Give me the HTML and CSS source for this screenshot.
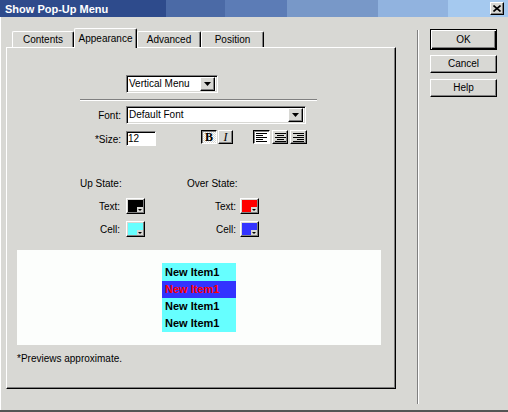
FILE: index.html
```html
<!DOCTYPE html>
<html>
<head>
<meta charset="utf-8">
<link rel="stylesheet" href="styles.css">
</head>
<body>
<div class="window">
  <div class="titlebar">
    <span class="title">Show Pop-Up Menu</span>
    <span class="close"><svg width="8" height="7" viewBox="0 0 8 7"><path d="M0.5 0.5L7.5 6.5M7.5 0.5L0.5 6.5" stroke="#000" stroke-width="1.6"/></svg></span>
  </div>
  <div class="body">
    <div class="left">
      <div class="tabs">
        <div class="tab t-contents">Contents</div>
        <div class="tab t-appearance active">Appearance</div>
        <div class="tab t-advanced">Advanced</div>
        <div class="tab t-position">Position</div>
      </div>
      <div class="panel">
        <div class="type-row">
          <div class="select sel-type">
            <span class="sel-text">Vertical Menu</span>
            <span class="arrow-btn"><svg width="7" height="4" viewBox="0 0 7 4"><path d="M0 0H7L3.5 4Z" fill="#000"/></svg></span>
          </div>
        </div>
        <div class="rule"></div>
        <div class="font-row">
          <span class="lbl">Font:</span>
          <div class="select sel-font">
            <span class="sel-text">Default Font</span>
            <span class="arrow-btn"><svg width="7" height="4" viewBox="0 0 7 4"><path d="M0 0H7L3.5 4Z" fill="#000"/></svg></span>
          </div>
        </div>
        <div class="size-row">
          <span class="lbl">*Size:</span>
          <div class="input">12</div>
          <span class="tbtn pressed dither b-btn">B</span>
          <span class="tbtn i-btn">I</span>
          <span class="tbtn pressed white al-left"><svg width="11" height="9" viewBox="0 0 11 9"><path d="M0 0.5H11M0 2.5H7M0 4.5H11M0 6.5H7M0 8.5H11" stroke="#000"/></svg></span>
          <span class="tbtn al-center"><svg width="11" height="9" viewBox="0 0 11 9"><path d="M0 0.5H11M2 2.5H9M0 4.5H11M2 6.5H9M0 8.5H11" stroke="#000"/></svg></span>
          <span class="tbtn al-right"><svg width="11" height="9" viewBox="0 0 11 9"><path d="M0 0.5H11M4 2.5H11M0 4.5H11M4 6.5H11M0 8.5H11" stroke="#000"/></svg></span>
        </div>
        <div class="states">
          <div class="state-col up">
            <div class="state-head">Up State:</div>
            <div class="state-row first">
              <span class="slbl">Text:</span>
              <span class="swatch"><svg width="15" height="12" viewBox="0 0 15 12"><path d="M0 0H15V7H9V12H0Z" fill="#000"/><path d="M10 9H14L12 11Z" fill="#000"/></svg></span>
            </div>
            <div class="state-row">
              <span class="slbl">Cell:</span>
              <span class="swatch"><svg width="15" height="12" viewBox="0 0 15 12"><path d="M0 0H15V7H9V12H0Z" fill="#66ffff"/><path d="M10 9H14L12 11Z" fill="#000"/></svg></span>
            </div>
          </div>
          <div class="state-col over">
            <div class="state-head">Over State:</div>
            <div class="state-row first">
              <span class="slbl">Text:</span>
              <span class="swatch"><svg width="15" height="12" viewBox="0 0 15 12"><path d="M0 0H15V7H9V12H0Z" fill="#ff0000"/><path d="M10 9H14L12 11Z" fill="#000"/></svg></span>
            </div>
            <div class="state-row">
              <span class="slbl">Cell:</span>
              <span class="swatch"><svg width="15" height="12" viewBox="0 0 15 12"><path d="M0 0H15V7H9V12H0Z" fill="#3333ff"/><path d="M10 9H14L12 11Z" fill="#000"/></svg></span>
            </div>
          </div>
        </div>
        <div class="preview">
          <div class="menu">
            <div class="mi first">New Item1</div>
            <div class="mi over">New Item1</div>
            <div class="mi">New Item1</div>
            <div class="mi">New Item1</div>
          </div>
        </div>
        <div class="note">*Previews approximate.</div>
      </div>
    </div>
    <div class="sep"></div>
    <div class="buttons">
      <div class="btn default">OK</div>
      <div class="btn cancel">Cancel</div>
      <div class="btn help">Help</div>
    </div>
  </div>
</div>
</body>
</html>
```

FILE: styles.css
```css
html, body {
  margin: 0;
  padding: 0;
  background: #d8d8d4;
}
body {
  font-family: "Liberation Sans", Arial, sans-serif;
  font-size: 10px;
  color: #000;
}
.window {
  width: 508px;
  height: 412px;
  box-sizing: border-box;
  background: #d8d8d4;
  border-bottom: 2px solid #555555;
  display: flex;
  flex-direction: column;
  overflow: hidden;
}
.titlebar {
  height: 17px;
  flex: none;
  display: flex;
  align-items: center;
  justify-content: space-between;
  padding: 0 4px 0 5px;
  background: linear-gradient(to right,
    #2e4b8c 0, #2e4b8c 166px,
    #4b6aa6 166px, #4b6aa6 225px,
    #5c7cb6 225px, #5c7cb6 287px,
    #7898c8 287px, #7898c8 378px,
    #91b3df 378px, #91b3df 448px,
    #a5c9ef 448px);
}
.title {
  color: #fff;
  font-weight: bold;
  font-size: 11px;
  line-height: 17px;
  padding-top: 1px;
}
.close {
  width: 14px;
  height: 13px;
  box-sizing: border-box;
  background: #d8d8d4;
  border: 1px solid;
  border-color: #fff #000 #000 #fff;
  box-shadow: inset -1px -1px #808080;
  display: flex;
  align-items: center;
  justify-content: center;
}
.body {
  flex: 1;
  display: flex;
  box-shadow: inset 1px 0 #fff;
}
.left {
  margin: 11px 0 0 6px;
  width: 390px;
  display: flex;
  flex-direction: column;
}
.tabs {
  height: 19px;
  display: flex;
  align-items: flex-end;
  padding-left: 6px;
}
.tab {
  height: 16px;
  box-sizing: border-box;
  border-top: 1px solid #fff;
  border-left: 1px solid #fff;
  border-right: 1px solid #000;
  box-shadow: inset -1px 0 #808080;
  border-radius: 2px 2px 0 0;
  text-align: center;
  line-height: 15px;
  background: #d8d8d4;
}
.t-contents { width: 62px; }
.t-appearance { width: 63px; }
.t-advanced { width: 64px; }
.t-position { width: 63px; }
.tab.active {
  height: 20px;
  margin-bottom: -1px;
  line-height: 19px;
  position: relative;
  z-index: 1;
}
.panel {
  width: 390px;
  height: 342px;
  box-sizing: border-box;
  border-top: 1px solid #fff;
  border-left: 1px solid #fff;
  border-right: 1px solid #000;
  border-bottom: 1px solid #000;
  box-shadow: inset -1px -1px #808080;
}
.type-row {
  margin: 27px 0 0 119px;
}
.select {
  height: 18px;
  box-sizing: border-box;
  background: #fff;
  border: 1px solid;
  border-color: #808080 #fff #fff #808080;
  box-shadow: inset 1px 1px #000, inset -1px -1px #d8d8d4;
  padding: 2px 2px 2px 2px;
  display: flex;
  align-items: center;
  justify-content: space-between;
}
.sel-type { width: 92px; }
.sel-font { width: 180px; }
.sel-text {
  line-height: 12px;
  padding-left: 0;
}
.arrow-btn {
  width: 15px;
  height: 14px;
  box-sizing: border-box;
  background: #d8d8d4;
  border: 1px solid;
  border-color: #fff #000 #000 #fff;
  box-shadow: inset -1px -1px #808080;
  display: flex;
  align-items: center;
  justify-content: center;
}
.rule {
  margin: 6px 0 0 73px;
  width: 237px;
  height: 1px;
  background: #808080;
  border-bottom: 1px solid #fff;
}
.font-row {
  display: flex;
  align-items: center;
  margin-top: 5px;
}
.lbl {
  width: 114px;
  padding-right: 5px;
  text-align: right;
}
.size-row {
  display: flex;
  align-items: flex-start;
  margin-top: 6px;
  height: 16px;
}
.size-row .lbl {
  line-height: 16px;
  padding-top: 2px;
  line-height: 15px;
}
.input {
  width: 30px;
  height: 15px;
  margin-top: 1px;
  box-sizing: border-box;
  background: #fff;
  border: 1px solid;
  border-color: #808080 #fff #fff #808080;
  box-shadow: inset 1px 1px #000;
  padding-left: 1px;
  line-height: 13px;
}
.tbtn {
  width: 16px;
  height: 14px;
  box-sizing: border-box;
  border: 1px solid;
  border-color: #fff #000 #000 #fff;
  box-shadow: inset -1px -1px #808080;
  background: #d8d8d4;
  display: flex;
  align-items: center;
  justify-content: center;
  font-family: "Liberation Serif", "Times New Roman", serif;
  font-size: 12px;
  line-height: 12px;
}
.tbtn.pressed {
  border-color: #000 #fff #fff #000;
  box-shadow: inset 1px 1px #808080;
}
.tbtn.dither {
  background: repeating-conic-gradient(#ffffff 0 25%, #d8d8d4 0 50%) 0 0 / 2px 2px;
}
.tbtn.white {
  background: #fff;
}
.b-btn {
  margin-left: 45px;
  font-weight: bold;
}
.i-btn {
  margin-left: 1px;
  width: 15px;
  font-style: italic;
}
.al-left {
  margin-left: 20px;
  width: 17px;
}
.al-center {
  margin-left: 2px;
  width: 16px;
}
.al-right {
  margin-left: 2px;
  width: 17px;
}
.states {
  display: flex;
  margin: 32px 0 0 73px;
}
.state-col.up { width: 65px; }
.state-col.over { margin-left: 42px; }
.state-head {
  height: 12px;
  line-height: 12px;
}
.state-row {
  display: flex;
  align-items: center;
  margin-top: 7px;
}
.state-row.first { margin-top: 8px; }
.slbl {
  text-align: right;
}
.up .slbl { width: 40px; margin-right: 6px; }
.over .slbl { width: 49px; margin-right: 4px; }
.swatch {
  width: 19px;
  height: 16px;
  box-sizing: border-box;
  border: 1px solid;
  border-color: #fff #000 #000 #fff;
  box-shadow: inset -1px -1px #808080;
  background: #d8d8d4;
  padding: 1px;
  display: block;
}
.swatch svg { display: block; }
.preview {
  margin: 13px 0 0 10px;
  width: 364px;
  height: 95px;
  box-sizing: border-box;
  background: #fcfefc;
  padding-top: 13px;
  display: flex;
  justify-content: center;
  align-items: flex-start;
}
.menu {
  width: 74px;
  background: #66ffff;
}
.mi {
  height: 17px;
  line-height: 17px;
  padding-left: 3px;
  font-weight: bold;
  font-size: 11px;
  color: #000;
}
.mi.first { height: 18px; line-height: 18px; }
.mi.over {
  background: #3333ff;
  color: #ff0000;
}
.note {
  margin: 8px 0 0 10px;
  line-height: 12px;
}
.sep {
  margin: 13px 0 0 21px;
  width: 1px;
  height: 374px;
  background: #808080;
  border-right: 1px solid #fff;
}
.buttons {
  margin: 12px 0 0 11px;
  width: 67px;
  display: flex;
  flex-direction: column;
}
.btn {
  height: 18px;
  box-sizing: border-box;
  background: #d8d8d4;
  border: 1px solid;
  border-color: #fff #000 #000 #fff;
  box-shadow: inset -1px -1px #808080;
  text-align: center;
  line-height: 16px;
}
.btn.default {
  height: 21px;
  border: 1px solid #000;
  box-shadow: inset 1px 1px #fff, inset -1px -1px #000, inset -2px -2px #808080;
  line-height: 19px;
}
.btn.cancel { margin-top: 5px; }
.btn.help { margin-top: 6px; }
```
